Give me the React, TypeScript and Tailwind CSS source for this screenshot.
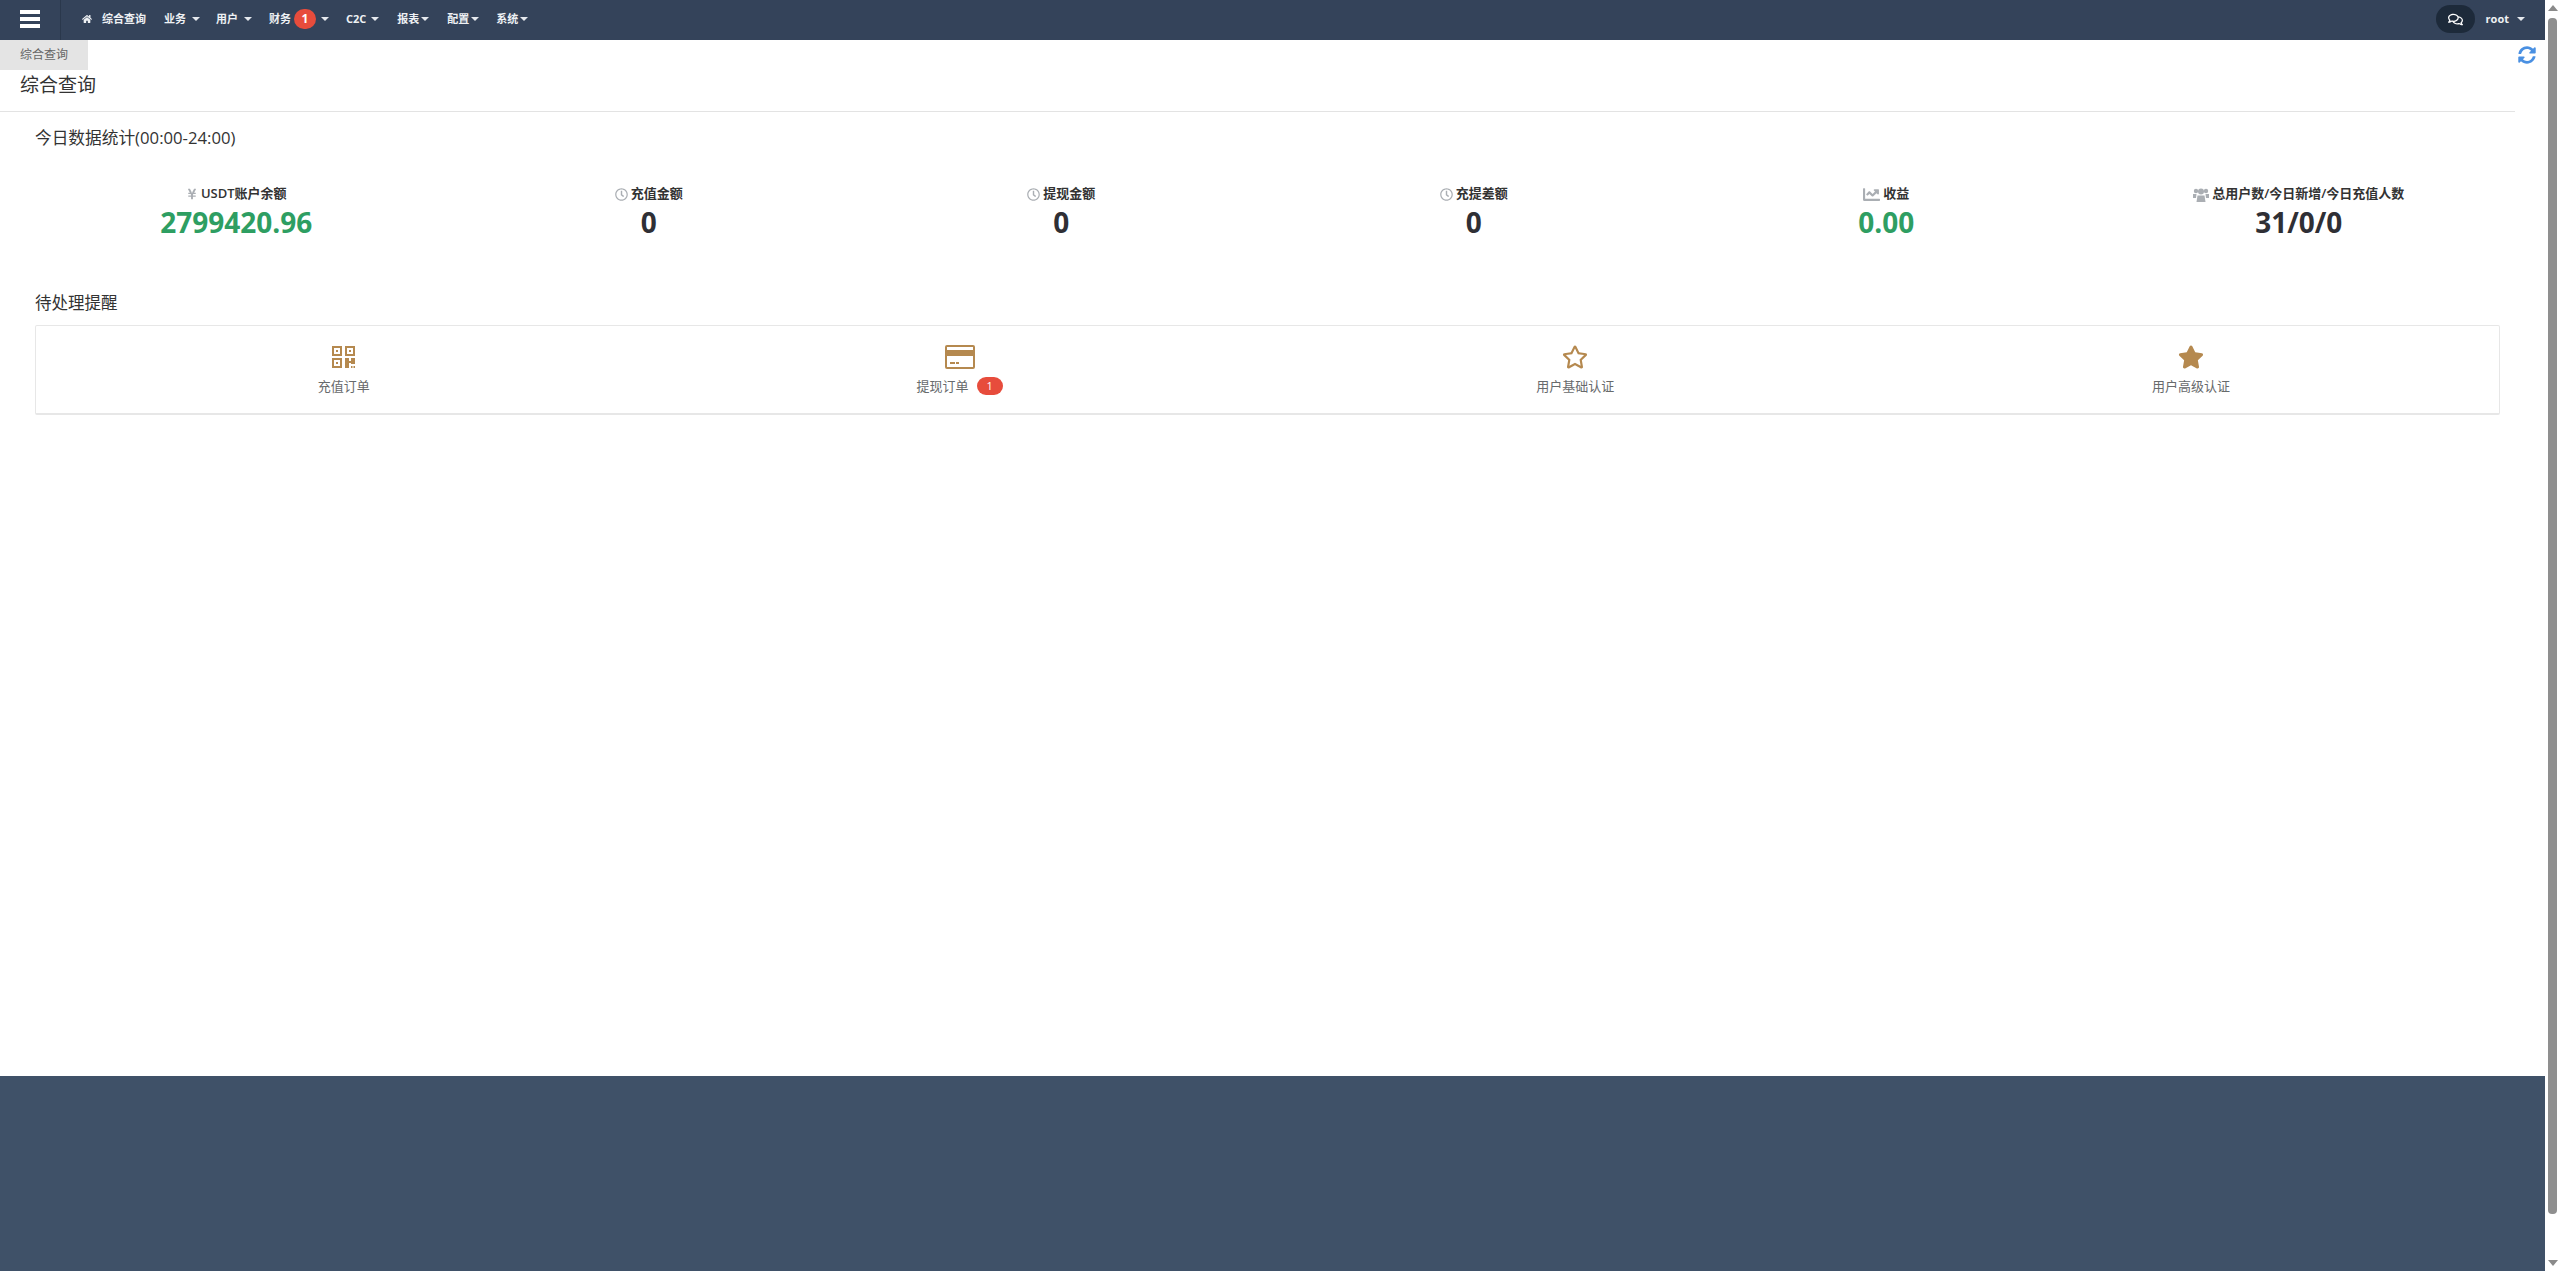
import { FaHome, FaRegClock, FaYenSign, FaChartLine, FaRegStar, FaStar, FaSyncAlt, FaRegComments } from 'react-icons/fa';
import type { ReactNode } from 'react';

function Caret({ className = '' }: { className?: string }) {
  return <span className={`inline-block w-0 h-0 border-x-[4px] border-x-transparent border-t-[4px] border-t-[#e5e9ee] ${className}`} />;
}

function QrIcon() {
  return (
    <svg width="23" height="22" viewBox="0 0 23 22" fill="#b5894f">
      <path fillRule="evenodd" d="M0 0h10v10H0zM2 2v6h6V2zM4 4h2v2H4z" />
      <path fillRule="evenodd" d="M13 0h10v10H13zM15 2v6h6V2zM17 4h2v2h-2z" />
      <path fillRule="evenodd" d="M0 12h10v10H0zM2 14v6h6v-6zM4 16h2v2H4z" />
      <path d="M13 12h4v3h2v-3h4v6h-4v-1h-2v5h-4zM19 20h1.500v2H19zM21.500 20H23v2h-1.500z" />
    </svg>
  );
}

function CardIcon() {
  return (
    <svg width="30" height="24" viewBox="0 0 30 24">
      <rect width="30" height="24" rx="2" fill="#b5894f" />
      <rect x="2" y="2" width="26" height="3" fill="#fff" />
      <rect x="2" y="11" width="26" height="11" fill="#fff" />
      <rect x="5" y="17" width="5" height="2" fill="#b5894f" />
      <rect x="11" y="17" width="3" height="2" fill="#b5894f" />
    </svg>
  );
}

function UsersIcon() {
  return (
    <svg width="16" height="15" viewBox="0 0 16 15" fill="currentColor">
      <circle cx="3" cy="4" r="2.200" />
      <circle cx="13" cy="4" r="2.200" />
      <circle cx="8" cy="4.500" r="3" />
      <path d="M0 7h3.500L3 11H0zM12.500 7H16v4h-3z" />
      <path d="M4.500 8.500h7L12.500 15h-9z" />
    </svg>
  );
}

const stats: { icon: ReactNode; label: string; value: string; green?: boolean }[] = [
  { icon: <FaYenSign size={12} />, label: 'USDT账户余额', value: '2799420.96', green: true },
  { icon: <FaRegClock size={13} />, label: '充值金额', value: '0' },
  { icon: <FaRegClock size={13} />, label: '提现金额', value: '0' },
  { icon: <FaRegClock size={13} />, label: '充提差额', value: '0' },
  { icon: <FaChartLine size={17} />, label: '收益', value: '0.00', green: true },
  { icon: <UsersIcon />, label: '总用户数/今日新增/今日充值人数', value: '31/0/0' },
];

const todos: { icon: ReactNode; label: string; badge?: string }[] = [
  { icon: <QrIcon />, label: '充值订单' },
  { icon: <CardIcon />, label: '提现订单', badge: '1' },
  { icon: <FaRegStar size={26} color="#b5894f" />, label: '用户基础认证' },
  { icon: <FaStar size={26} color="#b5894f" />, label: '用户高级认证' },
];

export default function App() {
  return (
    <div className="flex h-[1271px] overflow-hidden bg-white text-[#333] font-['Open_Sans','Noto_Sans_CJK_SC',sans-serif]">
      <div className="flex-1 flex flex-col min-w-0">
        {/* 顶部导航 */}
        <nav className="h-10 shrink-0 bg-[#34435a] flex items-center pb-[2px] text-[11px] font-bold text-[#eef1f4]">
          <div className="w-[61px] h-10 -mb-[2px] pb-[2px] border-r border-[#2a384c] flex items-center justify-center">
            <div className="w-5 flex flex-col gap-[3px]">
              <span className="h-[4px] bg-white" />
              <span className="h-[4px] bg-white" />
              <span className="h-[4px] bg-white" />
            </div>
          </div>
          <FaHome size={10} className="ml-[21px]" />
          <span className="ml-[10px] w-[45px]">综合查询</span>
          <span className="ml-[17px]">业务</span>
          <Caret className="ml-[6px]" />
          <span className="ml-[16px]">用户</span>
          <Caret className="ml-[6px]" />
          <span className="ml-[17px]">财务</span>
          <span className="ml-[3px] w-[22px] h-[20px] rounded-full bg-[#e74c3c] text-white text-xs flex items-center justify-center">1</span>
          <Caret className="ml-[5px]" />
          <span className="ml-[17px]">C2C</span>
          <Caret className="ml-[5px]" />
          <span className="ml-[18px]">报表</span>
          <Caret className="ml-[2px]" />
          <span className="ml-[18px]">配置</span>
          <Caret className="ml-[2px]" />
          <span className="ml-[17px]">系统</span>
          <Caret className="ml-[2px]" />
          <div className="ml-auto mr-[20px] flex items-center">
            <div className="w-[39px] h-7 rounded-full bg-[#1d2a3a] flex items-center justify-center text-white">
              <FaRegComments size={15} />
            </div>
            <span className="ml-[11px]">root</span>
            <Caret className="ml-[8px] border-t-[#8e99a8]" />
          </div>
        </nav>

        {/* 内容区 */}
        <main className="relative flex-1 min-h-0">
          <FaSyncAlt size={18} color="#4a90e2" className="absolute right-[9px] top-[6px]" />
          <div className="w-[88px] h-[30px] bg-[#e4e4e4] text-[#666] text-xs flex items-center pl-5">综合查询</div>
          <div className="w-[2515px] h-[42px] border-b border-[#e3e3e3] pl-5 flex items-start">
            <h1 className="text-[19px] font-normal leading-[30px] text-[#333]">综合查询</h1>
          </div>

          <div className="pl-[35px] pr-[45px]">
            <h2 className="mt-[14px] text-[16.7px] leading-6 font-normal">今日数据统计(00:00-24:00)</h2>
            <div className="mt-[35px] -ml-[5px] grid grid-cols-6 w-[2475px]">
              {stats.map((s) => (
                <div key={s.label} className="flex flex-col items-center">
                  <div className="h-[18px] flex items-center gap-[3px] text-[13px] font-semibold text-[#333]">
                    <span className="text-[#aaaeb3]">{s.icon}</span>
                    {s.label}
                  </div>
                  <div className={`text-[28px] leading-[38px] font-bold ${s.green ? 'text-[#2e9e62]' : 'text-[#2f2f35]'}`}>{s.value}</div>
                </div>
              ))}
            </div>

            <h2 className="mt-[50px] text-[16.5px] leading-6 font-normal">待处理提醒</h2>
            <div className="mt-[10px] w-[2465px] h-[90px] border border-[#e7e7e7] border-b-2 rounded-[2px] grid grid-cols-4">
              {todos.map((t) => (
                <div key={t.label} className="flex flex-col items-center pt-[17px]">
                  <div className="h-[28px] flex items-center justify-center">{t.icon}</div>
                  <div className="mt-[6px] flex items-center gap-2 text-[13px] leading-[18px] text-[#676a6c]">
                    {t.label}
                    {t.badge && (
                      <span className="w-[26px] h-[18px] rounded-full bg-[#e74c3c] text-white text-[11px] flex items-center justify-center">{t.badge}</span>
                    )}
                  </div>
                </div>
              ))}
            </div>
          </div>
        </main>

        <footer className="h-[195px] shrink-0 bg-[#3f5168]" />
      </div>

      {/* 滚动条 */}
      <aside className="w-[15px] shrink-0 flex flex-col items-center bg-white">
        <span className="mt-[5px] w-0 h-0 border-x-[5px] border-x-transparent border-b-[6px] border-b-[#8a8a8a]" />
        <span className="mt-[7px] w-[9px] h-[1196px] rounded-[4px] bg-[#8f8f8f]" />
        <span className="mt-auto mb-[5px] w-0 h-0 border-x-[5px] border-x-transparent border-t-[6px] border-t-[#8a8a8a]" />
      </aside>
    </div>
  );
}
